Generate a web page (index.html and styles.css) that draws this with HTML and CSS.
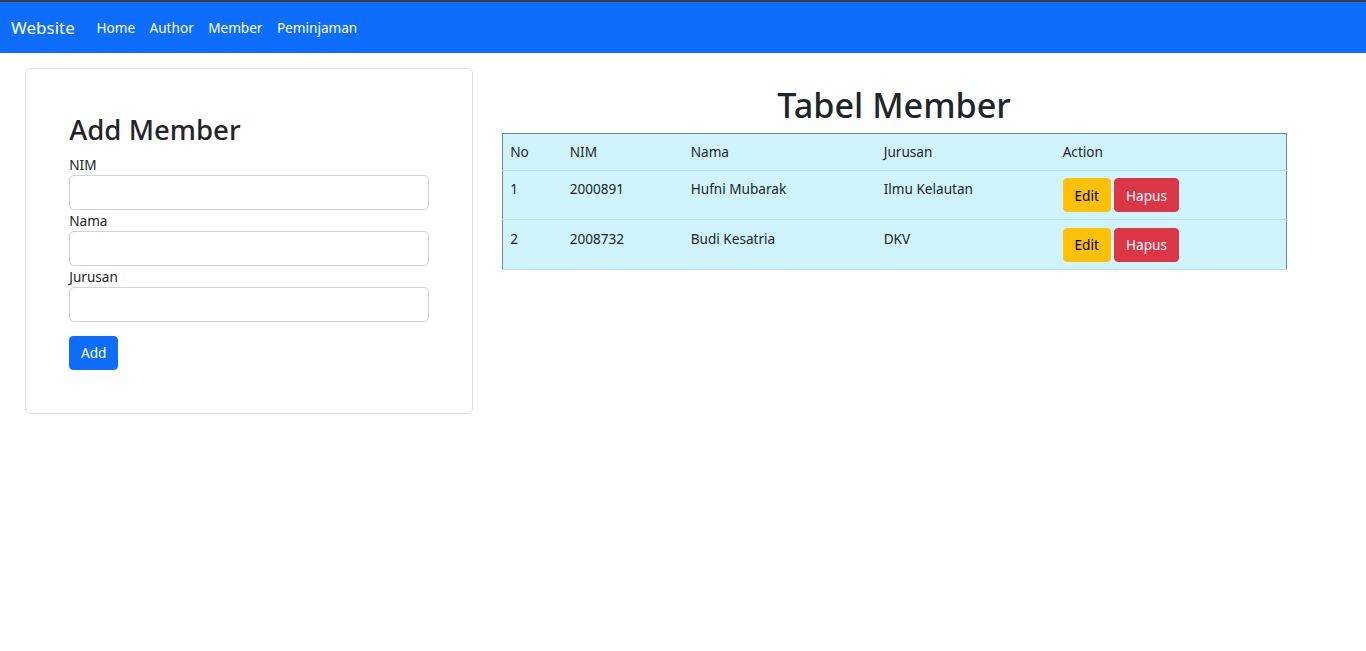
FILE: index.html
```html
<!DOCTYPE html>
<html lang="id">
<head>
<meta charset="utf-8">
<title>Member</title>
<link rel="stylesheet" href="styles.css">
</head>
<body>
<div class="topline"></div>
<nav class="navbar">
  <a class="brand" href="#">Website</a>
  <ul class="nav">
    <li><a href="#">Home</a></li>
    <li><a href="#">Author</a></li>
    <li><a href="#">Member</a></li>
    <li><a href="#">Peminjaman</a></li>
  </ul>
</nav>
<main class="main">
  <section class="card">
    <h2 class="card-title">Add Member</h2>
    <form class="form">
      <label class="label" for="nim">NIM</label>
      <input class="input" id="nim" type="text">
      <label class="label" for="nama">Nama</label>
      <input class="input" id="nama" type="text">
      <label class="label" for="jurusan">Jurusan</label>
      <input class="input" id="jurusan" type="text">
      <div class="form-actions"><button class="btn btn-primary" type="button">Add</button></div>
    </form>
  </section>
  <section class="table-col">
    <h1 class="table-title">Tabel Member</h1>
    <table class="table">
      <colgroup>
        <col class="c-no"><col class="c-nim"><col class="c-nama"><col class="c-jur"><col class="c-act">
      </colgroup>
      <thead>
        <tr><th>No</th><th>NIM</th><th>Nama</th><th>Jurusan</th><th>Action</th></tr>
      </thead>
      <tbody>
        <tr><td>1</td><td>2000891</td><td>Hufni Mubarak</td><td>Ilmu Kelautan</td><td><button class="btn btn-warning" type="button">Edit</button> <button class="btn btn-danger" type="button">Hapus</button></td></tr>
        <tr><td>2</td><td>2008732</td><td>Budi Kesatria</td><td>DKV</td><td><button class="btn btn-warning" type="button">Edit</button> <button class="btn btn-danger" type="button">Hapus</button></td></tr>
      </tbody>
    </table>
  </section>
</main>
</body>
</html>
```

FILE: styles.css
```css
* { box-sizing: border-box; }
html, body { margin: 0; padding: 0; }
body {
  font-family: "Noto Sans", "Open Sans", sans-serif;
  font-size: 13.6px;
  line-height: 21.6px;
  color: #212529;
  background: #fff;
}
.topline { height: 2px; background: #3c3c3c; }
.navbar {
  display: flex;
  align-items: center;
  height: 51px;
  background: #0d6efd;
  padding: 0 11px;
}
.brand {
  color: #fff;
  text-decoration: none;
  font-size: 17px;
  margin-right: 14.5px;
}
.nav { display: flex; list-style: none; margin: 0; padding: 0; }
.nav a {
  display: block;
  color: #fff;
  text-decoration: none;
  padding: 0 7.2px;
  font-size: 13.6px;
}
.main {
  display: flex;
  align-items: flex-start;
  padding: 15px 0 0 25px;
  gap: 29px;
}
.card {
  width: 448px;
  border: 1px solid #dee2e6;
  border-radius: 5px;
  padding: 43.2px;
}
.card-title {
  margin: 0 0 7px;
  font-size: 27.6px;
  font-weight: 500;
  line-height: 34.5px;
}
.form { display: flex; flex-direction: column; }
.label { display: block; line-height: 21px; }
.input {
  display: block;
  width: 100%;
  height: 35px;
  border: 1px solid #ced4da;
  border-radius: 5px;
  font: inherit;
  padding: 5px 11px;
}
.form-actions { margin-top: 14px; }
.btn {
  display: inline-block;
  font: inherit;
  font-size: 13.6px;
  line-height: 21.6px;
  border: 1px solid transparent;
  border-radius: 4px;
  padding: 5.4px 10.8px;
  height: 34px;
  cursor: pointer;
}
.btn-primary { background: #0d6efd; color: #fff; border-color: #0d6efd; }
.btn-warning { background: #ffc107; color: #000; border-color: #ffc107; }
.btn-danger { background: #dc3545; color: #fff; border-color: #dc3545; }
.table-col { width: 784px; padding-top: 15px; }
.table-title {
  margin: 0 0 7px;
  text-align: center;
  font-size: 34.2px;
  font-weight: 500;
  line-height: 43.2px;
}
.table {
  width: 784px;
  table-layout: fixed;
  border-collapse: collapse;
  background: #cff4fc;
  border: 1px solid #6f8a91;
  border-bottom-color: #badce3;
}
.c-no { width: 60px; }
.c-nim { width: 121px; }
.c-nama { width: 193px; }
.c-jur { width: 179px; }
.c-act { width: 231px; }
.table th, .table td {
  text-align: left;
  font-weight: 400;
  vertical-align: top;
  padding: 7.2px;
  border-bottom: 1px solid #badce3;
  line-height: 21.6px;
}
.table th { padding-top: 7px; }
```
